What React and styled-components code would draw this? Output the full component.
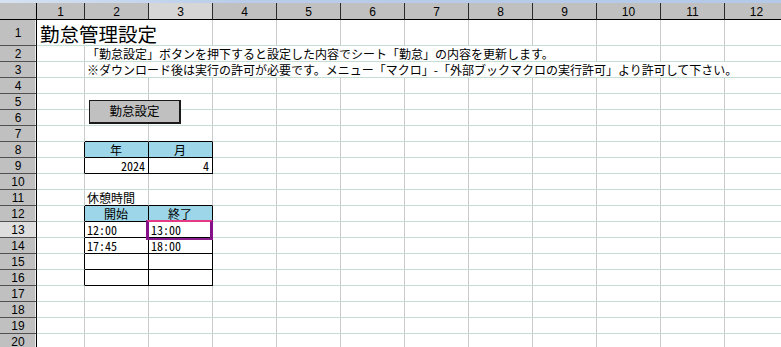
import React from "react";
import styled, { createGlobalStyle } from "styled-components";

const GlobalStyle = createGlobalStyle`
  html, body {
    margin: 0;
    padding: 0;
    background: #fff;
    overflow: hidden;
  }
  body {
    font-family: "Noto Sans CJK JP", sans-serif;
    color: #000;
  }
`;

const GRID_V = "#c9cccc";
const GRID_H = "#c6ddd5";
const HEAD_FILL = "#9dd6e8";

const colWidths = [48, ...Array(11).fill(64)];
const rowHeights = [26, ...Array(19).fill(16)];

const Frame = styled.div`
  position: relative;
  width: 781px;
  height: 347px;
  overflow: hidden;
`;

const Grid = styled.div`
  display: grid;
  grid-template-columns: 37px ${colWidths.map((w) => `${w}px`).join(" ")};
  grid-template-rows: 3px 17px ${rowHeights.map((h) => `${h}px`).join(" ")};
`;

const TitleStrip = styled.div`
  grid-column: 1 / -1;
  background: linear-gradient(90deg, #d6e2f2 0%, #b9cdea 30%, #b4c9e8 100%);
`;

const Corner = styled.div`
  box-sizing: border-box;
  background: #c0c0c0;
  border-right: 1px solid #000;
  border-bottom: 1px solid #000;
`;

const ColHead = styled.div`
  box-sizing: border-box;
  display: flex;
  align-items: center;
  justify-content: center;
  background: ${({ $active }) => ($active ? "#d6d6d6" : "#c0c0c0")};
  border-right: 1px solid #2a2a2a;
  border-bottom: 1px solid #000;
  font-family: "Liberation Sans Narrow", "Liberation Sans", sans-serif;
  font-size: 12px;
  line-height: 1;
  padding-top: 1px;
`;

const RowHead = styled.div`
  box-sizing: border-box;
  display: flex;
  align-items: center;
  justify-content: center;
  background: ${({ $active }) => ($active ? "#dedede" : "#c0c0c0")};
  border-right: 1px solid #000;
  border-bottom: 1px solid #505050;
  box-shadow: inset -1px 0 0 #ececec;
  font-family: "Liberation Sans Narrow", "Liberation Sans", sans-serif;
  font-size: 12px;
  line-height: 1;
  padding-top: 1px;
`;

const Cell = styled.div`
  box-sizing: border-box;
  grid-column: span ${({ $span }) => $span};
  display: flex;
  align-items: center;
  justify-content: ${({ $align }) =>
    $align === "center" ? "center" : $align === "right" ? "flex-end" : "flex-start"};
  padding: ${({ $big }) => ($big ? "2px 3px 0" : "0 3px 0 2px")};
  background: ${({ $head }) => ($head ? HEAD_FILL : "#fff")};
  border-right: 1px solid ${({ $rb }) => ($rb ? "#000" : GRID_V)};
  border-bottom: 1px solid ${({ $bb }) => ($bb ? "#000" : GRID_H)};
  font-size: ${({ $big }) => ($big ? "19.5px" : "12px")};
  line-height: 1;
  white-space: nowrap;
  overflow: visible;
  position: relative;
  z-index: ${({ $span }) => ($span > 1 ? 1 : 0)};
`;

const Num = styled.span`
  font-family: "Noto Sans Mono CJK JP", "Noto Sans CJK JP", monospace;
  font-feature-settings: "hwid" 1;
  font-size: 12px;
`;

const SheetButton = styled.button`
  position: absolute;
  left: 89px;
  top: 100px;
  width: 92px;
  height: 24px;
  box-sizing: border-box;
  margin: 0;
  padding: 0 0 1px;
  background: #c0c0c0;
  border: 1px solid #1a1a1a;
  border-right-width: 2px;
  border-bottom-width: 2px;
  font-family: "Noto Sans CJK JP", sans-serif;
  font-size: 12.5px;
  color: #000;
  line-height: 1;
  z-index: 2;
`;

const Selection = styled.div`
  position: absolute;
  left: 146px;
  top: 220px;
  width: 67px;
  height: 20px;
  box-sizing: border-box;
  border-left: 3px solid #85108a;
  border-right: 3px solid #85108a;
  border-top: 2px solid #e43a86;
  border-bottom: 2px solid #8a1c8e;
  z-index: 3;
  pointer-events: none;
`;

const cells = {
  "1-1": { text: "勤怠管理設定", span: 3, big: true },
  "2-2": {
    text: "「勤怠設定」ボタンを押下すると設定した内容でシート「勤怠」の内容を更新します。",
    span: 8,
  },
  "3-2": {
    text: "※ダウンロード後は実行の許可が必要です。メニュー「マクロ」-「外部ブックマクロの実行許可」より許可して下さい。",
    span: 11,
  },
  "8-2": { text: "年", head: true, align: "center" },
  "8-3": { text: "月", head: true, align: "center" },
  "9-2": { text: "2024", num: true, align: "right" },
  "9-3": { text: "4", num: true, align: "right" },
  "11-2": { text: "休憩時間" },
  "12-2": { text: "開始", head: true, align: "center" },
  "12-3": { text: "終了", head: true, align: "center" },
  "13-2": { text: "12:00", num: true },
  "13-3": { text: "13:00", num: true },
  "14-2": { text: "17:45", num: true },
  "14-3": { text: "18:00", num: true },
};

const boxes = [
  { r1: 8, r2: 9, c1: 2, c2: 3 },
  { r1: 12, r2: 16, c1: 2, c2: 3 },
];

const boxed = (r, c) =>
  boxes.some((b) => r >= b.r1 && r <= b.r2 && c >= b.c1 && c <= b.c2);

const SheetRow = ({ r }) => {
  const out = [];
  let c = 1;
  while (c <= 12) {
    const data = cells[`${r}-${c}`];
    const span = data?.span || 1;
    const last = c + span - 1;
    out.push(
      <Cell
        key={c}
        $span={span}
        $big={data?.big}
        $head={data?.head}
        $align={data?.align}
        $rb={boxed(r, last) || boxed(r, last + 1)}
        $bb={boxed(r, c) || boxed(r + 1, c)}
      >
        {data && (data.num ? <Num>{data.text}</Num> : data.text)}
      </Cell>
    );
    c += span;
  }
  return (
    <>
      <RowHead $active={r === 13}>{r}</RowHead>
      {out}
    </>
  );
};

const App = () => {
  return (
    <Frame>
      <GlobalStyle />
      <Grid>
        <TitleStrip />
        <Corner />
        {Array.from({ length: 12 }, (_, i) => (
          <ColHead key={i} $active={i === 2}>
            {i + 1}
          </ColHead>
        ))}
        {Array.from({ length: 20 }, (_, i) => (
          <SheetRow key={i} r={i + 1} />
        ))}
      </Grid>
      <SheetButton>勤怠設定</SheetButton>
      <Selection />
    </Frame>
  );
};

export default App;
